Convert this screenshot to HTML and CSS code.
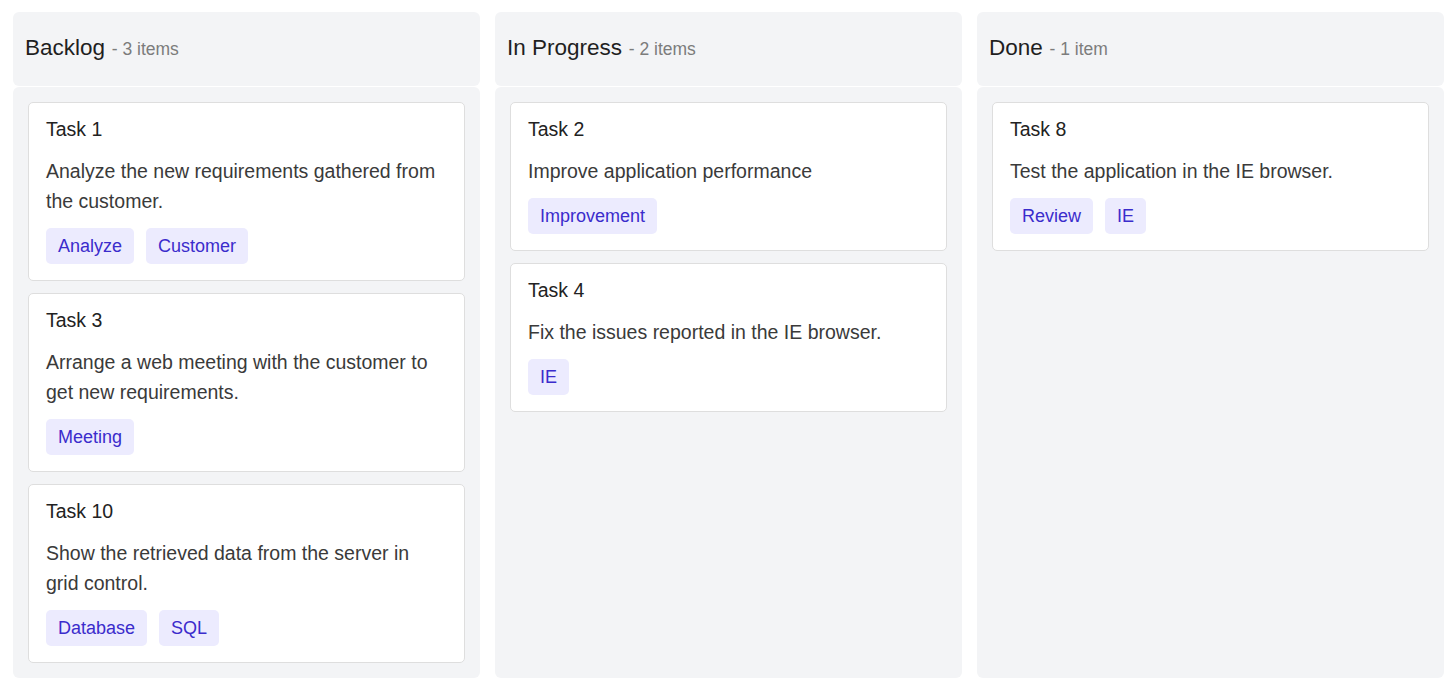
FILE: index.html
```html
<!DOCTYPE html>
<html lang="en">
<head>
<meta charset="utf-8">
<title>Kanban</title>
<link rel="stylesheet" href="styles.css">
</head>
<body>
<div class="board">
  <section class="column">
    <header class="col-header"><h2 class="col-heading"><span class="col-title">Backlog</span> <span class="col-count">- 3 items</span></h2></header>
    <div class="col-body">
      <article class="card">
        <h3 class="card-title">Task 1</h3>
        <p class="card-text">Analyze the new requirements gathered from the customer.</p>
        <div class="tags"><span class="tag">Analyze</span><span class="tag">Customer</span></div>
      </article>
      <article class="card">
        <h3 class="card-title">Task 3</h3>
        <p class="card-text">Arrange a web meeting with the customer to get new requirements.</p>
        <div class="tags"><span class="tag">Meeting</span></div>
      </article>
      <article class="card">
        <h3 class="card-title">Task 10</h3>
        <p class="card-text">Show the retrieved data from the server in grid control.</p>
        <div class="tags"><span class="tag">Database</span><span class="tag">SQL</span></div>
      </article>
    </div>
  </section>
  <section class="column">
    <header class="col-header"><h2 class="col-heading"><span class="col-title">In Progress</span> <span class="col-count">- 2 items</span></h2></header>
    <div class="col-body">
      <article class="card">
        <h3 class="card-title">Task 2</h3>
        <p class="card-text">Improve application performance</p>
        <div class="tags"><span class="tag">Improvement</span></div>
      </article>
      <article class="card">
        <h3 class="card-title">Task 4</h3>
        <p class="card-text">Fix the issues reported in the IE browser.</p>
        <div class="tags"><span class="tag">IE</span></div>
      </article>
    </div>
  </section>
  <section class="column">
    <header class="col-header"><h2 class="col-heading"><span class="col-title">Done</span> <span class="col-count">- 1 item</span></h2></header>
    <div class="col-body">
      <article class="card">
        <h3 class="card-title">Task 8</h3>
        <p class="card-text">Test the application in the IE browser.</p>
        <div class="tags"><span class="tag">Review</span><span class="tag">IE</span></div>
      </article>
    </div>
  </section>
</div>
</body>
</html>
```

FILE: styles.css
```css
html, body {
  margin: 0;
  padding: 0;
  background: #ffffff;
  font-family: "Liberation Sans", Arial, sans-serif;
}

.board {
  display: grid;
  grid-template-columns: repeat(3, 1fr);
  column-gap: 15px;
  padding: 12px 3px 6px 13px;
  height: 684px;
  box-sizing: border-box;
}

.column {
  display: flex;
  flex-direction: column;
  min-height: 0;
}

.col-header {
  flex-shrink: 0;
  background: #f3f4f6;
  border-radius: 6px;
  height: 74px;
  box-sizing: border-box;
  display: flex;
  align-items: center;
  padding: 0 12px 4px;
}

.col-heading {
  margin: 0;
  font-weight: normal;
  white-space: nowrap;
}

.col-title {
  font-size: 22.5px;
  color: #1f1f1f;
}

.col-count {
  font-size: 17.5px;
  color: #7c7c7c;
}

.col-body {
  flex: 1;
  margin-top: 1px;
  background: #f3f4f6;
  border-radius: 6px;
  padding: 15px;
  display: flex;
  flex-direction: column;
  gap: 12px;
}

.card {
  flex-shrink: 0;
  background: #ffffff;
  border: 1px solid #dedede;
  border-radius: 5px;
  padding: 15px 17px 16px;
}

.card-title {
  margin: 0;
  font-weight: normal;
  font-size: 19.5px;
  line-height: 23px;
  color: #222222;
}

.card-text {
  margin: 15px 0 12px;
  font-size: 19.5px;
  line-height: 30px;
  color: #3a3a3a;
}

.tags {
  display: flex;
  gap: 12px;
}

.tag {
  background: #ecebfe;
  color: #3b2ccc;
  border-radius: 5px;
  font-size: 18px;
  height: 36px;
  line-height: 36px;
  padding: 0 12px;
}
```
